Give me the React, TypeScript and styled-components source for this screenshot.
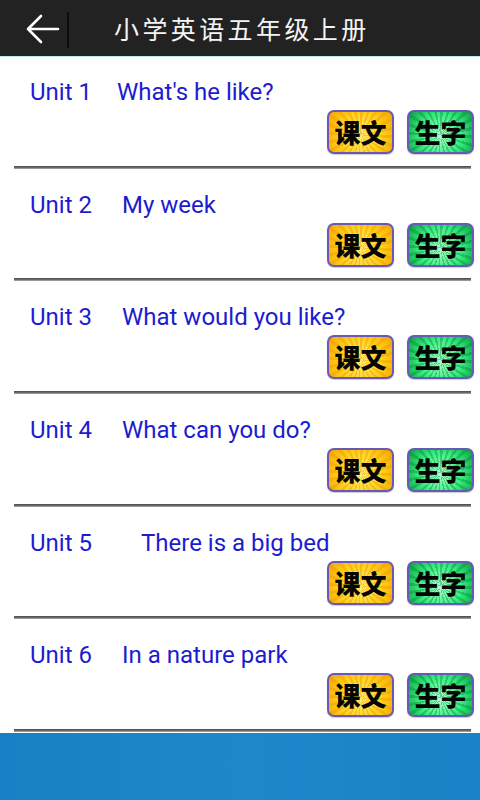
import styled, { createGlobalStyle } from 'styled-components';

const GlobalStyle = createGlobalStyle`
  html, body {
    margin: 0;
    padding: 0;
    background: #fff;
  }
  #root {
    height: 800px;
  }
`;

type Unit = {
  label: string;
  title: string;
  offset: number;
};

const units: Unit[] = [
  { label: 'Unit 1', title: "What's he like?", offset: 0 },
  { label: 'Unit 2', title: 'My week', offset: 5 },
  { label: 'Unit 3', title: 'What would you like?', offset: 5 },
  { label: 'Unit 4', title: 'What can you do?', offset: 5 },
  { label: 'Unit 5', title: 'There is a big bed', offset: 24 },
  { label: 'Unit 6', title: 'In a nature park', offset: 5 },
];

const BackIcon = () => (
  <svg width="34" height="30" viewBox="0 0 34 30" fill="none">
    <path
      d="M32 15H3M15 2L2 15l13 13"
      stroke="#fff"
      strokeWidth="2.6"
      strokeLinecap="round"
      strokeLinejoin="round"
    />
  </svg>
);

export default function App() {
  return (
    <>
      <GlobalStyle />
      <Screen>
        <Header>
          <BackButton>
            <BackIcon />
          </BackButton>
          <Separator />
          <HeaderTitle>小学英语五年级上册</HeaderTitle>
        </Header>
        <List>
          {units.map((u) => (
            <Row key={u.label}>
              <Heading>
                <UnitLabel>{u.label}</UnitLabel>
                <UnitTitle $offset={u.offset}>{u.title}</UnitTitle>
              </Heading>
              <Actions>
                <ActionButton $tone="yellow">课文</ActionButton>
                <ActionButton $tone="green">生字</ActionButton>
              </Actions>
              <Divider />
            </Row>
          ))}
        </List>
        <Footer />
      </Screen>
    </>
  );
}

const Screen = styled.div`
  display: flex;
  flex-direction: column;
  height: 800px;
  width: 480px;
  overflow: hidden;
  background: #fff;
`;

const Header = styled.header`
  display: flex;
  align-items: center;
  height: 56px;
  flex-shrink: 0;
  background: #222222;
  border-bottom: 1px solid #bfe8f4;
`;

const BackButton = styled.div`
  display: flex;
  align-items: center;
  justify-content: center;
  width: 34px;
  height: 56px;
  margin-left: 26px;
  padding-top: 2px;
`;

const Separator = styled.div`
  width: 2px;
  height: 36px;
  margin-left: 7px;
  margin-top: 3px;
  background: #0c0c0c;
`;

const HeaderTitle = styled.h1`
  margin: 0 0 0 45px;
  font-family: 'Noto Sans CJK SC', sans-serif;
  font-size: 25px;
  font-weight: 400;
  letter-spacing: 3.4px;
  color: #f4f4f4;
  line-height: 1;
`;

const List = styled.main`
  flex: 1;
  display: flex;
  flex-direction: column;
`;

const Row = styled.section`
  flex: 1;
  display: flex;
  flex-direction: column;
`;

const Heading = styled.div`
  display: flex;
  align-items: center;
  margin-top: 22px;
  padding-left: 30px;
  height: 26px;
  font-family: Roboto, 'Liberation Sans', sans-serif;
  font-size: 24px;
  color: #1c1ccf;
`;

const UnitLabel = styled.span`
  width: 87px;
  flex-shrink: 0;
`;

const UnitTitle = styled.span<{ $offset: number }>`
  padding-left: ${(p) => p.$offset}px;
`;

const Actions = styled.div`
  display: flex;
  justify-content: flex-end;
  gap: 13px;
  margin-top: 5px;
  padding-right: 6px;
`;

const tones = {
  yellow: {
    center: '#fff27a',
    mid: '#fcd21c',
    edge: '#f2a600',
    ray: 'rgba(250, 150, 0, 0.45)',
  },
  green: {
    center: '#b4ffd2',
    mid: '#36ec7e',
    edge: '#0e9e44',
    ray: 'rgba(0, 140, 55, 0.4)',
  },
};

const ActionButton = styled.button<{ $tone: 'yellow' | 'green' }>`
  width: 67px;
  height: 44px;
  padding: 0;
  border: 2px solid #6a58b8;
  border-radius: 7px;
  background:
    repeating-conic-gradient(
      from 0deg at 50% 58%,
      ${(p) => tones[p.$tone].ray} 0deg 6deg,
      transparent 6deg 15deg
    ),
    radial-gradient(
      circle at 50% 58%,
      ${(p) => tones[p.$tone].center} 0%,
      ${(p) => tones[p.$tone].mid} 55%,
      ${(p) => tones[p.$tone].edge} 100%
    );
  font-family: 'Noto Sans CJK SC', sans-serif;
  font-size: 26px;
  font-weight: 900;
  line-height: 40px;
  color: #050505;
  box-shadow: 0 1px 1px rgba(0, 0, 0, 0.2);
`;

const Divider = styled.div`
  margin: auto 9px 1px 14px;
  height: 3px;
  background: linear-gradient(#4a4a4a, #6a6a6a 50%, #b0b0b0);
`;

const Footer = styled.footer`
  height: 67px;
  flex-shrink: 0;
  background: linear-gradient(90deg, #1880c4, #1c88ca 50%, #1a82c6);
`;
